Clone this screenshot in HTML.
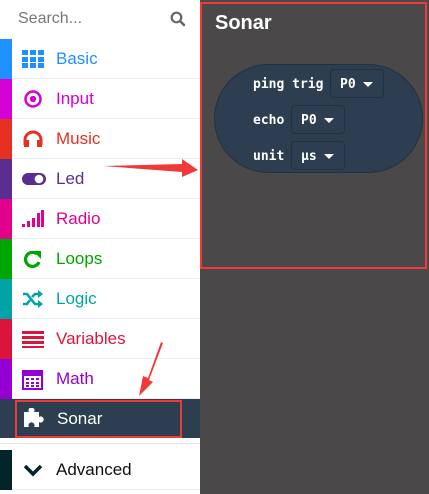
<!DOCTYPE html>
<html><head><meta charset="utf-8"><style>
*{margin:0;padding:0;box-sizing:border-box}
body{width:429px;height:494px;overflow:hidden;background:#fff;font-family:"Liberation Sans",sans-serif;position:relative}
.side{position:absolute;left:0;top:0;width:200px;height:494px;background:#fff}
.search{position:absolute;left:18px;top:10px;font-size:16px;color:#777}
.row{position:absolute;left:0;width:200px;height:40px;border-bottom:1px solid #e9eef2}
.strip{position:absolute;left:0;top:0;width:12px;height:40px}
.row .t{position:absolute;left:56px;top:10px;font-size:17px}
.row svg{position:absolute;left:22px;top:11px}
.main{position:absolute;left:200px;top:0;width:229px;height:494px;background:#4b4849}
.mono{font-family:"DejaVu Sans Mono","Liberation Mono",monospace;font-weight:bold;font-size:13px;color:#fff;position:absolute}
.dd{position:absolute;border:1px solid #233240;border-radius:4px;background:#2c3e50}
.tri{position:absolute;width:0;height:0;border-left:5px solid transparent;border-right:5px solid transparent;border-top:5px solid #fff}
</style></head><body>
<div class="side">
<div class="search">Search...</div>
<svg style="position:absolute;left:170px;top:11px" width="16" height="16" viewBox="0 0 16 16"><circle cx="6.5" cy="6.5" r="4.8" fill="none" stroke="#666" stroke-width="2.2"/><line x1="10" y1="10" x2="14" y2="14" stroke="#666" stroke-width="2.6" stroke-linecap="round"/></svg>

<div class="row" style="top:39px"><div class="strip" style="background:#1e90ff"></div>
<svg width="22" height="18"><g fill="#1e90ff"><rect x="0" y="0" width="6" height="5"/><rect x="8" y="0" width="6" height="5"/><rect x="16" y="0" width="6" height="5"/><rect x="0" y="7" width="6" height="5"/><rect x="8" y="7" width="6" height="5"/><rect x="16" y="7" width="6" height="5"/><rect x="0" y="13" width="6" height="5"/><rect x="8" y="13" width="6" height="5"/><rect x="16" y="13" width="6" height="5"/></g></svg>
<div class="t" style="color:#1e90ff">Basic</div></div>

<div class="row" style="top:79px"><div class="strip" style="background:#d400d4"></div>
<svg width="22" height="18"><circle cx="11" cy="9" r="7.5" fill="none" stroke="#d400d4" stroke-width="2.5"/><circle cx="11" cy="9" r="3.2" fill="#d400d4"/></svg>
<div class="t" style="color:#d400d4">Input</div></div>

<div class="row" style="top:119px"><div class="strip" style="background:#e63022"></div>
<svg width="22" height="18"><path d="M3 15 V10 A8 8 0 0 1 19 10 V15" fill="none" stroke="#e63022" stroke-width="3"/><rect x="2" y="10" width="5" height="7" fill="#e63022"/><rect x="15" y="10" width="5" height="7" fill="#e63022"/></svg>
<div class="t" style="color:#e63022">Music</div></div>

<div class="row" style="top:159px"><div class="strip" style="background:#5c2d91"></div>
<svg width="24" height="18"><rect x="0" y="3" width="24" height="12" rx="6" fill="#5c2d91"/><circle cx="17" cy="9" r="4.3" fill="#fff"/></svg>
<div class="t" style="color:#5c2d91">Led</div></div>

<div class="row" style="top:199px"><div class="strip" style="background:#e3008c"></div>
<svg width="22" height="18"><g fill="#e3008c"><rect x="0" y="14" width="3" height="3"/><rect x="5" y="11" width="3" height="6"/><rect x="10" y="8" width="3" height="9"/><rect x="15" y="3" width="3" height="14"/><rect x="19" y="0" width="3" height="17"/></g></svg>
<div class="t" style="color:#e3008c">Radio</div></div>

<div class="row" style="top:239px"><div class="strip" style="background:#00a600"></div>
<svg width="22" height="18"><path d="M15 4 A7 7 0 1 0 17 12" fill="none" stroke="#00a600" stroke-width="3.2"/><path d="M11 1 L19 1 L19 9 Z" fill="#00a600"/></svg>
<div class="t" style="color:#00a600">Loops</div></div>

<div class="row" style="top:279px"><div class="strip" style="background:#00a4a6"></div>
<svg width="22" height="18"><path d="M1 4 H5 L13 14 H17 M1 14 H5 L8 10 M10 7 L13 4 H17" fill="none" stroke="#00a4a6" stroke-width="2.6"/><path d="M16 0 L21 4 L16 8Z M16 10 L21 14 L16 18Z" fill="#00a4a6"/></svg>
<div class="t" style="color:#00a4a6">Logic</div></div>

<div class="row" style="top:319px"><div class="strip" style="background:#dc143c"></div>
<svg width="22" height="18"><g fill="#dc143c"><rect x="0" y="1" width="22" height="3"/><rect x="0" y="6" width="22" height="3"/><rect x="0" y="11" width="22" height="3"/><rect x="0" y="16" width="22" height="2"/></g></svg>
<div class="t" style="color:#dc143c">Variables</div></div>

<div class="row" style="top:359px"><div class="strip" style="background:#9400d3"></div>
<svg width="22" height="20"><rect x="1" y="0" width="19" height="19" fill="none" stroke="#9400d3" stroke-width="2"/><rect x="1" y="0" width="19" height="6" fill="#9400d3"/><g fill="#9400d3"><rect x="4" y="8" width="3" height="2"/><rect x="9" y="8" width="3" height="2"/><rect x="14" y="8" width="3" height="2"/><rect x="4" y="12" width="3" height="2"/><rect x="9" y="12" width="3" height="2"/><rect x="14" y="12" width="3" height="2"/><rect x="4" y="15" width="3" height="2"/><rect x="9" y="15" width="3" height="2"/><rect x="14" y="15" width="3" height="2"/></g></svg>
<div class="t" style="color:#9400d3">Math</div></div>

<div class="row" style="top:399px;background:#2c3e50;height:39px;border:none">
<svg width="22" height="20" style="left:23px;top:9px"><path d="M1 4 H6 A3 3 0 1 1 11 4 H16 V9 A3 3 0 1 1 16 14 V19 H11 A3 3 0 1 0 6 19 H1Z" fill="#fff"/></svg>
<div class="t" style="color:#fff;left:57px">Sonar</div></div>
<div style="position:absolute;left:15px;top:400px;width:167px;height:38px;border:2px solid #f03a3a"></div>
<div style="position:absolute;left:0;top:443px;width:200px;height:1px;background:#e3e7ea"></div>

<div class="row" style="top:450px;border-bottom:1px solid #e9eef2"><div class="strip" style="background:#02242a"></div>
<svg width="22" height="18" style="top:12px"><path d="M3 4 L11 12 L19 4" fill="none" stroke="#02242a" stroke-width="3.5"/></svg>
<div class="t" style="color:#111">Advanced</div></div>
</div>

<div class="main">
<div style="position:absolute;left:0;top:2px;width:227px;height:267px;border:2px solid #f03a3a"></div>
<div style="position:absolute;left:15px;top:12px;color:#fff;font-size:20px;font-weight:bold">Sonar</div>
<div style="position:absolute;left:14px;top:64px;width:209px;height:109px;border-radius:55px;background:#2c3e50;border:1px solid #223140"></div>
<div class="mono" style="left:53px;top:77px">ping trig</div>
<div class="dd" style="left:130px;top:69px;width:54px;height:29px"></div>
<div class="mono" style="left:140px;top:77px">P0</div><div class="tri" style="left:163px;top:82px"></div>
<div class="mono" style="left:53px;top:113px">echo</div>
<div class="dd" style="left:91px;top:105px;width:54px;height:29px"></div>
<div class="mono" style="left:101px;top:113px">P0</div><div class="tri" style="left:124px;top:118px"></div>
<div class="mono" style="left:53px;top:149px">unit</div>
<div class="dd" style="left:91px;top:141px;width:54px;height:29px"></div>
<div class="mono" style="left:101px;top:149px">µs</div><div class="tri" style="left:124px;top:154px"></div>
</div>

<svg style="position:absolute;left:0;top:0" width="429" height="494">
<polygon points="103,166 182,164 182,159 198,170 182,177 182,172" fill="#f03a3a"/>
<polygon points="161,342 148,378 143,376 139,396 153,382 149,380 163,343" fill="#f03a3a"/>
</svg>
</body></html>
